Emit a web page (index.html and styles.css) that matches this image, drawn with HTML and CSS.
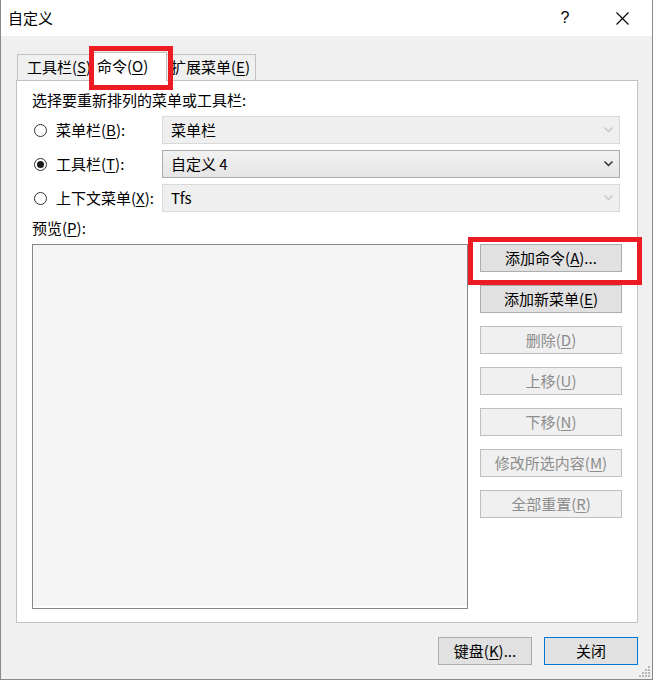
FILE: index.html
```html
<!DOCTYPE html>
<html lang="zh-CN">
<head>
    <meta charset="UTF-8">
    <meta name="viewport" content="width=device-width, initial-scale=1.0">
    <title>自定义</title>
    <link rel="stylesheet" href="styles.css">
</head>
<body>
    <div class="window">
        <div class="titlebar">
            <span class="title">自定义</span>
            <span class="title-btn help">?</span>
            <span class="title-btn close-x">
                <svg width="13" height="13" viewBox="0 0 13 13"><path d="M0.5 0.5 L12.5 12.5 M12.5 0.5 L0.5 12.5" stroke="#000" stroke-width="1.1" fill="none"/></svg>
            </span>
        </div>

        <div class="tabs">
            <div class="tab tab-first">工具栏(<u>S</u>)</div>
            <div class="tab tab-active">命令(<u>O</u>)</div>
            <div class="tab tab-last">扩展菜单(<u>E</u>)</div>
        </div>

        <div class="panel">
            <div class="panel-label">选择要重新排列的菜单或工具栏:</div>

            <div class="choice-rows">
                <div class="choice">
                    <span class="radio"></span>
                    <span class="choice-label">菜单栏(<u>B</u>):</span>
                    <div class="combo disabled">
                        <span>菜单栏</span>
                        <svg width="9" height="6" viewBox="0 0 9 6"><polyline points="0.5,0.5 4.5,4.5 8.5,0.5" stroke="#c4c4c4" stroke-width="1.3" fill="none"/></svg>
                    </div>
                </div>
                <div class="choice">
                    <span class="radio checked"></span>
                    <span class="choice-label">工具栏(<u>T</u>):</span>
                    <div class="combo">
                        <span>自定义 4</span>
                        <svg width="9" height="6" viewBox="0 0 9 6"><polyline points="0.5,0.5 4.5,4.5 8.5,0.5" stroke="#333" stroke-width="1.5" fill="none"/></svg>
                    </div>
                </div>
                <div class="choice">
                    <span class="radio"></span>
                    <span class="choice-label">上下文菜单(<u>X</u>):</span>
                    <div class="combo disabled">
                        <span>Tfs</span>
                        <svg width="9" height="6" viewBox="0 0 9 6"><polyline points="0.5,0.5 4.5,4.5 8.5,0.5" stroke="#c4c4c4" stroke-width="1.3" fill="none"/></svg>
                    </div>
                </div>
            </div>

            <div class="preview-label">预览(<u>P</u>):</div>

            <div class="preview-area">
                <div class="preview-box"></div>
                <div class="side-buttons">
                    <button class="btn">添加命令(<u>A</u>)...</button>
                    <button class="btn">添加新菜单(<u>E</u>)</button>
                    <button class="btn" disabled>删除(<u>D</u>)</button>
                    <button class="btn" disabled>上移(<u>U</u>)</button>
                    <button class="btn" disabled>下移(<u>N</u>)</button>
                    <button class="btn" disabled>修改所选内容(<u>M</u>)</button>
                    <button class="btn" disabled>全部重置(<u>R</u>)</button>
                </div>
            </div>
        </div>

        <div class="footer">
            <button class="btn footer-btn">键盘(<u>K</u>)...</button>
            <button class="btn footer-btn default">关闭</button>
        </div>

        <svg class="grip" width="12" height="12" viewBox="0 0 12 12" fill="#b8b8b8">
            <rect x="9" y="0" width="2" height="2"/>
            <rect x="6" y="3" width="2" height="2"/><rect x="9" y="3" width="2" height="2"/>
            <rect x="3" y="6" width="2" height="2"/><rect x="6" y="6" width="2" height="2"/><rect x="9" y="6" width="2" height="2"/>
            <rect x="0" y="9" width="2" height="2"/><rect x="3" y="9" width="2" height="2"/><rect x="6" y="9" width="2" height="2"/><rect x="9" y="9" width="2" height="2"/>
        </svg>

        <!-- red annotation boxes -->
        <div class="mark mark-tab"></div>
        <div class="mark mark-btn"></div>
    </div>
</body>
</html>
```

FILE: styles.css
```css
body {
    margin: 0;
    background: #fff;
    font-family: "Noto Sans CJK SC", "Noto Sans", sans-serif;
    font-size: 15px;
    color: #000;
}
u {
    text-decoration-thickness: 1px;
    text-underline-offset: 2px;
}
.window {
    position: relative;
    width: 653px;
    height: 680px;
    box-sizing: border-box;
    border: 1px solid #8a8a8a;
    border-top: none;
    background: #f0f0f0;
}
.titlebar {
    height: 36px;
    background: #fff;
    display: flex;
    align-items: center;
}
.title {
    padding-left: 7px;
    line-height: 20px;
    flex: 1;
}
.title-btn {
    width: 46px;
    height: 36px;
    display: flex;
    align-items: center;
    justify-content: center;
}
.help {
    font-family: "Liberation Sans", sans-serif;
    font-size: 16px;
    margin-right: 11px;
}
.close-x {
    margin-right: 7px;
}
.tabs {
    display: flex;
    align-items: flex-end;
    height: 28px;
    margin: 16px 0 0 16px;
}
.tab {
    box-sizing: border-box;
    height: 26px;
    line-height: 24px;
    border: 1px solid #c2c2c2;
    border-bottom: none;
    background: #f0f0f0;
    white-space: nowrap;
    overflow: hidden;
}
.tab-first {
    width: 75px;
    padding-left: 9px;
}
.tab-active {
    position: relative;
    z-index: 1;
    width: 77px;
    height: 29px;
    margin: 0 -2px -1px -2px;
    padding-left: 6px;
    line-height: 26px;
    background: #fff;
}
.tab-last {
    width: 91px;
    padding-left: 5px;
}
.panel {
    box-sizing: border-box;
    height: 543px;
    margin: 0 14px 0 15px;
    border: 1px solid #c2c2c2;
    background: #fff;
}
.panel-label {
    margin: 9px 0 0 15px;
    line-height: 20px;
}
.choice-rows {
    display: flex;
    flex-direction: column;
    gap: 6px;
    margin-top: 6px;
}
.choice {
    display: flex;
    align-items: center;
    padding-left: 17px;
}
.radio {
    box-sizing: border-box;
    width: 13px;
    height: 13px;
    border: 1px solid #333;
    border-radius: 50%;
    background: #fff;
    margin-right: 9px;
    display: flex;
    align-items: center;
    justify-content: center;
}
.radio.checked::after {
    content: "";
    width: 7px;
    height: 7px;
    border-radius: 50%;
    background: #1a1a1a;
}
.choice-label {
    width: 106px;
    line-height: 20px;
    white-space: nowrap;
}
.combo {
    box-sizing: border-box;
    flex: 1;
    height: 28px;
    margin-right: 17px;
    padding: 0 6px 0 8px;
    display: flex;
    align-items: center;
    justify-content: space-between;
    border: 1px solid #acacac;
    background: linear-gradient(#f2f2f2, #e5e5e5);
    line-height: 20px;
}
.combo.disabled {
    border-color: #d9d9d9;
    background: #efefef;
}
.preview-label {
    margin: 6px 0 0 15px;
    line-height: 20px;
}
.preview-area {
    display: flex;
    margin: 6px 0 0 15px;
}
.preview-box {
    box-sizing: border-box;
    width: 436px;
    height: 365px;
    border: 1px solid #828790;
    background: #f5f5f5;
    box-shadow: inset 0 -2px 0 #fff;
}
.side-buttons {
    display: flex;
    flex-direction: column;
    gap: 13px;
    margin-left: 12px;
}
.btn {
    box-sizing: border-box;
    width: 142px;
    height: 28px;
    padding: 0;
    border: 1px solid #adadad;
    background: #e1e1e1;
    font-family: inherit;
    font-size: 15px;
    line-height: 20px;
    color: #000;
}
.btn:disabled {
    border-color: #bfbfbf;
    background: #f0f0f0;
    color: #8c8c8c;
}
.footer {
    display: flex;
    justify-content: flex-end;
    gap: 12px;
    margin: 14px 14px 0 0;
}
.footer-btn {
    width: 94px;
}
.footer-btn.default {
    border-color: #0078d7;
}
.grip {
    position: absolute;
    right: 1px;
    bottom: 1px;
}
.mark {
    position: absolute;
    box-sizing: border-box;
    border: 5px solid #ed1c24;
    z-index: 2;
}
.mark-tab {
    left: 88px;
    top: 46px;
    width: 84px;
    height: 44px;
}
.mark-btn {
    left: 467px;
    top: 237px;
    width: 174px;
    height: 48px;
}
```
